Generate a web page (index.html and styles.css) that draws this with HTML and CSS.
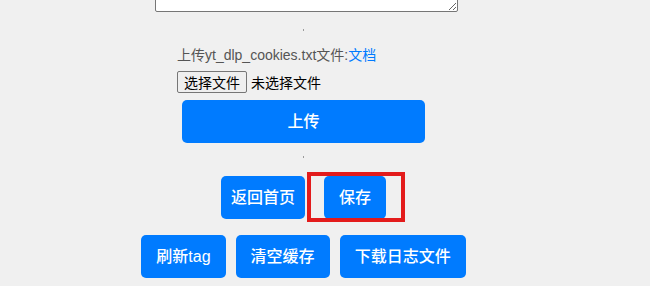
FILE: index.html
```html
<!DOCTYPE html>
<html lang="zh-CN">
<head>
    <meta charset="UTF-8">
    <meta name="viewport" content="width=device-width, initial-scale=1.0">
    <title>设置</title>
    <link rel="stylesheet" href="styles.css">
</head>
<body>
    <div class="page">
        <textarea class="config-box"></textarea>
        <div class="dot"></div>

        <form class="upload-form" onsubmit="return false">
            <div class="upload-label">上传yt_dlp_cookies.txt文件:<a href="#" class="doc-link">文档</a></div>
            <div class="file-row">
                <button type="button" class="file-button">选择文件</button>
                <span class="file-name">未选择文件</span>
            </div>
            <button type="submit" class="button button-wide">上传</button>
        </form>
        <div class="dot dot-lower"></div>

        <div class="row row-top">
            <button class="button button-home">返回首页</button>
            <div class="marked">
                <button class="button">保存</button>
                <div class="mark-box"></div>
            </div>
        </div>
        <div class="row row-bottom">
            <button class="button">刷新tag</button>
            <button class="button">清空缓存</button>
            <button class="button">下载日志文件</button>
        </div>
    </div>
</body>
</html>
```

FILE: styles.css
```css
body {
    margin: 0;
    background-color: #f0f0f0;
    font-family: 'Liberation Sans', 'Noto Sans CJK SC', sans-serif;
    overflow: hidden;
}

.page {
    width: 607px;
    display: flex;
    flex-direction: column;
    align-items: center;
}

.config-box {
    display: block;
    align-self: flex-start;
    margin: -60px 0 0 155px;
    width: 303px;
    height: 72px;
    box-sizing: border-box;
    border: 1px solid #767676;
    border-radius: 2px;
    background: #fff;
}

.dot {
    width: 1px;
    height: 2px;
    margin-top: 17px;
    background: #9a9a9a;
}

.dot-lower {
    margin-top: 13px;
}

.upload-form {
    width: 253px;
    margin-top: 15px;
}

.upload-label {
    font-size: 14px;
    line-height: 18px;
    color: #555;
}

.doc-link {
    color: #007bff;
    text-decoration: none;
}

.file-row {
    display: flex;
    align-items: center;
    margin-top: 7px;
    font-size: 14px;
}

.file-button {
    height: 22px;
    padding: 0 6px;
    border: 1px solid #767676;
    border-radius: 2px;
    background: #efefef;
    font-family: inherit;
    font-size: 14px;
    color: #000;
}

.file-name {
    margin-left: 4px;
    color: #000;
}

.button {
    padding: 12px 15px;
    border: none;
    border-radius: 5px;
    background-color: #007bff;
    color: #fff;
    font-family: inherit;
    font-size: 16px;
    font-weight: 500;
    line-height: 19px;
    cursor: pointer;
}

.button-wide {
    display: block;
    width: calc(100% - 10px);
    margin: 7px 5px 0;
}

.button-home {
    padding: 12px 10px;
}

.row {
    display: flex;
    justify-content: center;
}

.row-top {
    gap: 19px;
    margin-top: 18px;
}

.row-bottom {
    gap: 10px;
    margin-top: 16px;
}

.marked {
    position: relative;
}

.mark-box {
    position: absolute;
    left: -17px;
    top: -4px;
    width: 98px;
    height: 50px;
    box-sizing: border-box;
    border: 4px solid #e31b1b;
    pointer-events: none;
}
```
